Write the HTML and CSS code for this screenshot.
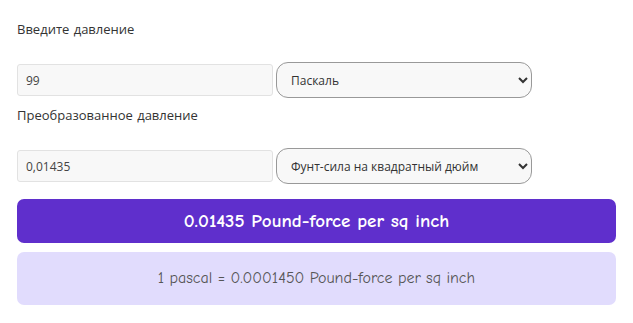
FILE: index.html
```html
<!DOCTYPE html>
<html lang="ru">
<head>
    <meta charset="UTF-8">
    <meta name="viewport" content="width=device-width, initial-scale=1.0">
    <title>Конвертер давления</title>
    <link rel="stylesheet" href="styles.css">
</head>
<body>
    <div class="converter">
        <label class="label" for="from-value">Введите давление</label>
        <div class="row">
            <input type="text" id="from-value" class="field" value="99">
            <select class="unit">
                <option>Паскаль</option>
            </select>
        </div>
        <label class="label" for="to-value">Преобразованное давление</label>
        <div class="row">
            <input type="text" id="to-value" class="field" value="0,01435">
            <select class="unit">
                <option>Фунт-сила на квадратный дюйм</option>
            </select>
        </div>
        <div class="result">0.01435 Pound-force per sq inch</div>
        <div class="formula">1 pascal = 0.0001450 Pound-force per sq inch</div>
    </div>
</body>
</html>
```

FILE: styles.css
```css
body {
    margin: 0;
    font-family: "Comic Neue", "Comic Sans MS", "Open Sans", sans-serif;
    background: #fff;
}
.converter {
    padding: 20px 17px 0 17px;
    width: 599px;
}
.label {
    display: block;
    font-size: 13px;
    color: #333;
    height: 20px;
    line-height: 20px;
    margin-bottom: 22px;
}
.row {
    display: flex;
    gap: 3px;
    align-items: center;
    height: 36px;
    margin-bottom: 8px;
}
.field {
    box-sizing: border-box;
    width: 256px;
    height: 32px;
    padding: 0 8px;
    font-family: "Open Sans", sans-serif;
    font-size: 12px;
    color: #444;
    background: #f8f8f8;
    border: 1px solid #e2e2e2;
    border-radius: 3px;
    outline: none;
}
.unit {
    box-sizing: border-box;
    width: 256px;
    height: 36px;
    padding: 0 10px;
    font-family: "Open Sans", sans-serif;
    font-size: 12px;
    color: #333;
    background: #f8f8f8;
    border: 1px solid #999;
    border-radius: 12px;
}
.result {
    margin-top: 15px;
    height: 44px;
    line-height: 44px;
    text-align: center;
    font-size: 19px;
    font-weight: bold;
    color: #fff;
    background: #5f2fcc;
    border-radius: 7px;
}
.formula {
    margin-top: 9px;
    height: 53px;
    line-height: 53px;
    text-align: center;
    font-size: 16px;
    color: #555;
    background: #e1dcfd;
    border-radius: 7px;
}
```
